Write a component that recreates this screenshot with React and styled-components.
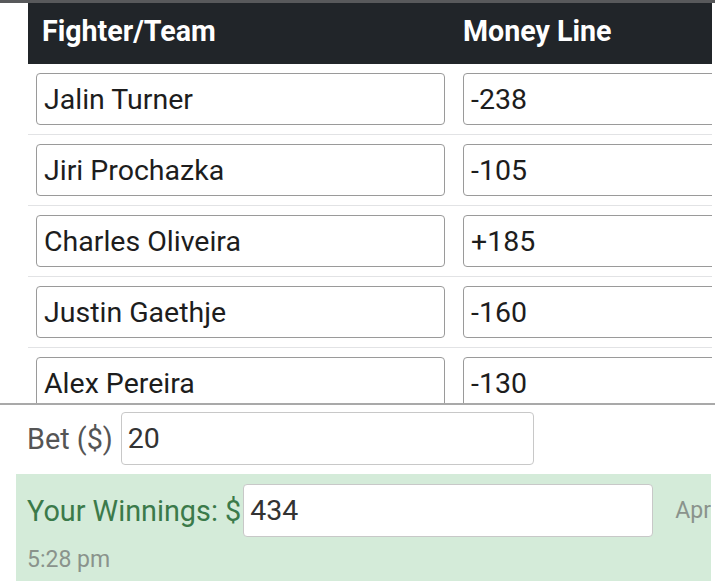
import React from 'react';
import styled, { createGlobalStyle } from 'styled-components';

const GlobalStyle = createGlobalStyle`
  html, body {
    margin: 0;
    padding: 0;
    background: #fff;
    font-family: Roboto, 'Liberation Sans', sans-serif;
    overflow: hidden;
  }
`

const Page = styled.div`
  width: 715px;
  height: 581px;
  overflow: hidden;
  display: flex;
  flex-direction: column;
`

const TopStrip = styled.div`
  height: 3px;
  background: #58595b;
  flex-shrink: 0;
`

const ScrollArea = styled.div`
  height: 400px;
  overflow: hidden;
  padding-left: 28px;
  flex-shrink: 0;
`

const Table = styled.div`
  width: 684px;
  overflow: hidden;
`

const HeaderRow = styled.div`
  display: grid;
  grid-template-columns: 426px 1fr;
  height: 61px;
  align-items: center;
  background: #212529;
  color: #fff;
  font-size: 28.6px;
  font-weight: 700;
`

const HeaderCell = styled.div`
  padding-left: ${p => p.$pad}px;
  padding-bottom: 6px;
  white-space: nowrap;
`

const Row = styled.div`
  display: grid;
  grid-template-columns: 426px 1fr;
  padding: 9px 0;
  border-bottom: 1px solid #e2e3e5;
`

const Cell = styled.div`
  padding-left: ${p => p.$pad}px;
  padding-right: ${p => p.$right}px;
  min-width: 0;
`

const Field = styled.div`
  height: 52px;
  box-sizing: border-box;
  border: 1px solid #9a9a9a;
  border-radius: 4px;
  background: #fff;
  display: flex;
  align-items: center;
  padding-left: 7px;
  font-size: 28.5px;
  color: #1d1d1d;
  white-space: nowrap;
  width: ${p => p.$w || 'auto'};
`

const Bottom = styled.div`
  flex: 1;
  border-top: 2px solid #a9a9a9;
  padding-top: 7px;
`

const BetRow = styled.div`
  display: flex;
  align-items: center;
  padding-left: 27px;
  gap: 8px;
  color: #555;
  font-size: 28.8px;
`

const SmallInput = styled.div`
  width: 413px;
  height: 53px;
  box-sizing: border-box;
  border: 1px solid #c8c8c8;
  border-radius: 4px;
  background: #fff;
  display: flex;
  align-items: center;
  padding-left: 6px;
  color: #333;
  font-size: 28.5px;
`

const WinBox = styled.div`
  margin: 9px 4px 0 16px;
  background: #d4ebd9;
  padding: 10px 0 0 11px;
  height: 120px;
  overflow: hidden;
`

const WinRow = styled.div`
  display: flex;
  align-items: center;
  white-space: nowrap;
`

const WinLabel = styled.span`
  color: #3b7a4a;
  font-size: 28.8px;
  margin-right: 2px;
`

const Stamp = styled.span`
  color: #8a938c;
  font-size: ${p => p.$size}px;
  margin-left: ${p => p.$left || 0}px;
`

const Time = styled.div`
  margin-top: 9px;
  color: #8a938c;
  font-size: 23px;
`

const fighters = [
  { name: 'Jalin Turner', line: '-238' },
  { name: 'Jiri Prochazka', line: '-105' },
  { name: 'Charles Oliveira', line: '+185' },
  { name: 'Justin Gaethje', line: '-160' },
  { name: 'Alex Pereira', line: '-130' },
];

const App = () => {
  return (
    <Page>
      <GlobalStyle />
      <TopStrip />
      <ScrollArea>
        <Table>
          <HeaderRow>
            <HeaderCell $pad={14}>Fighter/Team</HeaderCell>
            <HeaderCell $pad={9}>Money Line</HeaderCell>
          </HeaderRow>
          {fighters.map(f => (
            <Row key={f.name}>
              <Cell $pad={8} $right={9}>
                <Field>{f.name}</Field>
              </Cell>
              <Cell $pad={9} $right={0}>
                <Field $w="320px">{f.line}</Field>
              </Cell>
            </Row>
          ))}
        </Table>
      </ScrollArea>
      <Bottom>
        <BetRow>
          <span>Bet ($)</span>
          <SmallInput>20</SmallInput>
        </BetRow>
        <WinBox>
          <WinRow>
            <WinLabel>Your Winnings: $</WinLabel>
            <SmallInput>434</SmallInput>
            <Stamp $size={23} $left={22}>Apr</Stamp>
          </WinRow>
          <Time>5:28 pm</Time>
        </WinBox>
      </Bottom>
    </Page>
  );
}

export default App;
